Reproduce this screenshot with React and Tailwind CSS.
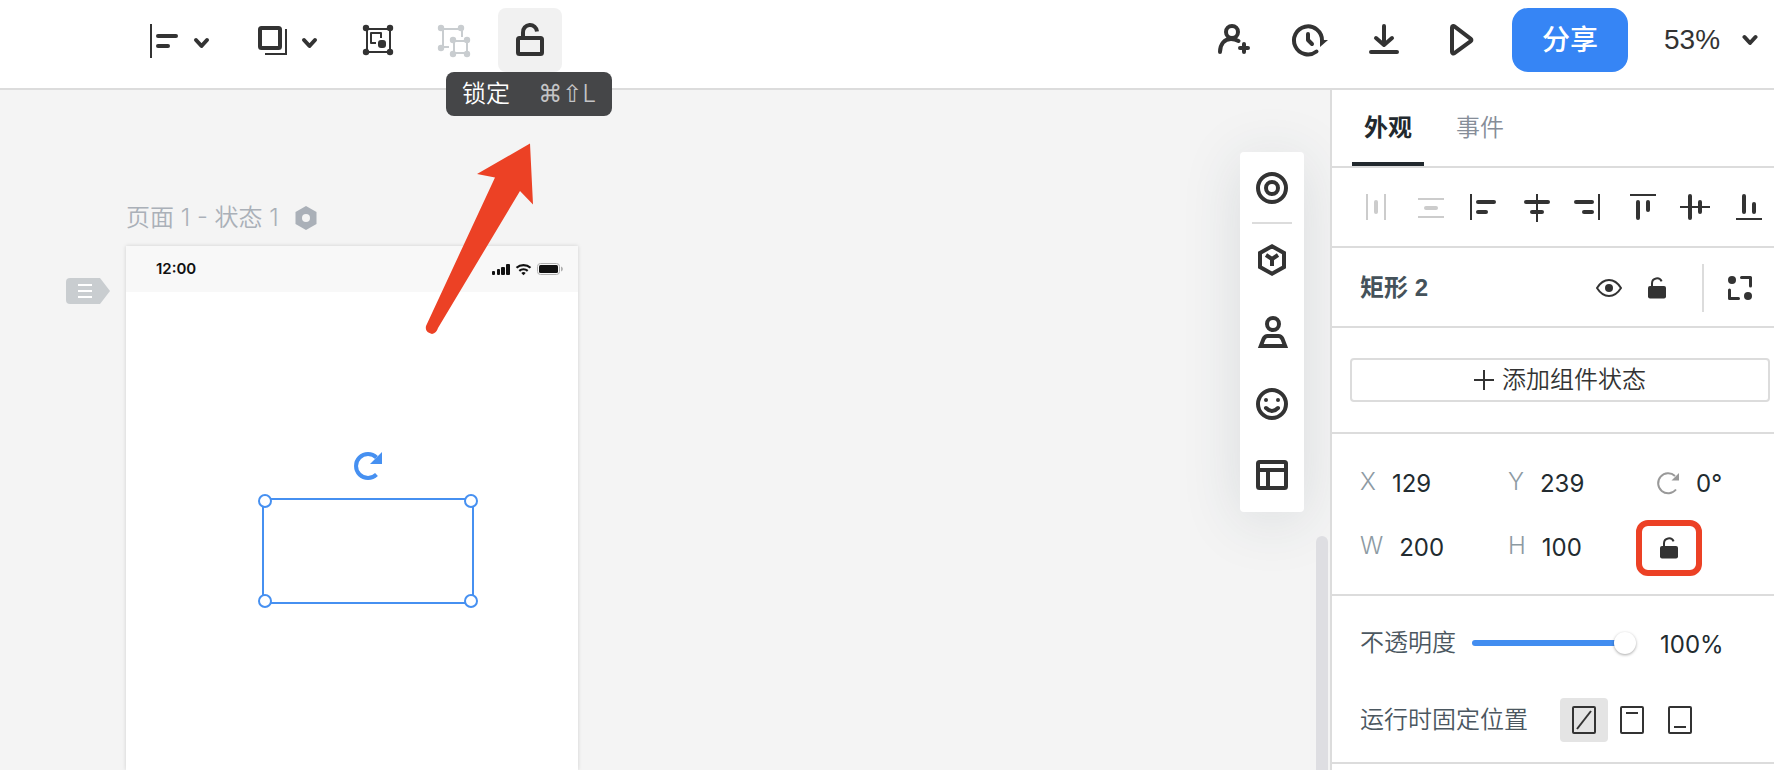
import React, { useState } from 'react';

const INK = '#333333';

function Chevron({ x, y }) {
  return (
    <path
      d={`M${x} ${y}l5.5 6 5.5-6`}
      fill="none"
      stroke={INK}
      strokeWidth="4"
      strokeLinecap="round"
      strokeLinejoin="round"
    />
  );
}

function Unlock({ className }) {
  return (
    <svg width="18" height="22" viewBox="0 0 18 22" className={className}>
      <path d="M4 9V6.200a5 5 0 0 1 9.600-1.800" fill="none" stroke={INK} strokeWidth="2" />
      <rect y="9" width="18" height="12.500" rx="2" fill={INK} />
    </svg>
  );
}

function ToolButton({ label, children, wide, active, disabled }) {
  return (
    <button
      type="button"
      aria-label={label}
      disabled={disabled}
      className={`h-16 shrink-0 rounded-lg ${wide ? 'w-24' : 'w-16'} ${active ? 'bg-[#f1f1f1]' : ''}`}
    >
      {children}
    </button>
  );
}

function Toolbar() {
  const [zoom, setZoom] = useState('53%');

  return (
    <header className="flex items-start justify-between border-b-2 border-[#dcdcdc] bg-white pt-2 pr-4 pb-4 pl-[130px]">
      <div className="flex gap-3">
        <ToolButton label="对齐" wide>
          <svg width="96" height="64" fill={INK}>
            <rect x="20" y="16" width="2" height="34" />
            <rect x="26" y="26" width="22" height="4" rx="2" />
            <rect x="26" y="36" width="14" height="4" rx="2" />
            <Chevron x={66} y={32} />
          </svg>
        </ToolButton>

        <ToolButton label="图层" wide>
          <svg width="96" height="64">
            <rect x="22" y="20" width="20" height="20" rx="1.500" fill="none" stroke={INK} strokeWidth="4" />
            <path d="M48 21v25H27" fill="none" stroke={INK} strokeWidth="2" />
            <Chevron x={66} y={32} />
          </svg>
        </ToolButton>

        <ToolButton label="组合">
          <svg width="64" height="64" fill={INK}>
            <path d="M21 21h23v23H21z" fill="none" stroke={INK} strokeWidth="2" />
            <circle cx="20" cy="20" r="3.200" />
            <circle cx="44" cy="20" r="3.200" />
            <circle cx="20" cy="44" r="3.200" />
            <circle cx="44" cy="44" r="3.200" />
            <path d="M30 35h-5V25h10v5" fill="none" stroke={INK} strokeWidth="2" strokeLinejoin="round" />
            <rect x="32" y="32" width="8" height="8" rx="3" />
          </svg>
        </ToolButton>

        <ToolButton label="取消组合" disabled>
          <svg width="64" height="64" fill="#c9cdd0">
            <path d="M27 39h-6V21h19v8M32 33h13v12H32z" fill="none" stroke="#c9cdd0" strokeWidth="2" />
            <circle cx="19" cy="20" r="3.200" />
            <circle cx="39" cy="20" r="3.200" />
            <circle cx="19" cy="40" r="3.200" />
            <circle cx="31" cy="32" r="3.200" />
            <circle cx="45" cy="32" r="3.200" />
            <circle cx="31" cy="46" r="3.200" />
            <circle cx="45" cy="46" r="3.200" />
          </svg>
        </ToolButton>

        <div className="relative flex">
          <ToolButton label="锁定" active>
            <svg width="64" height="64" fill="none" stroke={INK} strokeWidth="4">
              <rect x="20" y="30" width="24" height="16" rx="1.500" />
              <path d="M25 29v-4.500a7 7 0 0 1 14-1" />
            </svg>
          </ToolButton>
          <div
            role="tooltip"
            className="absolute top-16 -left-13 z-20 flex h-11 w-[166px] items-center justify-between rounded-lg bg-[#454648] px-4 text-2xl whitespace-nowrap text-white"
          >
            <span className="font-[350]">锁定</span>
            <span className="font-['DejaVu_Sans','Inter',sans-serif] leading-8 text-[#c4c4c6]">
              ⌘⇧<span className="font-['Inter',sans-serif] font-light">L</span>
            </span>
          </div>
        </div>
      </div>

      <div className="flex items-center">
        <div className="flex gap-3">
          <ToolButton label="邀请成员">
            <svg width="64" height="64" fill="none" stroke={INK} strokeWidth="4" strokeLinecap="round">
              <circle cx="32" cy="24" r="6" />
              <path d="M20 44c0-8 4.500-13 11-13 3 0 5 .6 7.500 2" />
              <path d="M44 36v8M40 40h8" />
            </svg>
          </ToolButton>
          <ToolButton label="历史版本">
            <svg width="64" height="64" fill="none" stroke={INK} strokeWidth="4" strokeLinecap="round">
              <path d="M40.500 43.500A14 14 0 1 1 46 32.500" />
              <path d="M32 26v6l4 4" strokeLinejoin="round" />
              <path d="M44 32h8l-8 7z" fill={INK} stroke="none" />
            </svg>
          </ToolButton>
          <ToolButton label="下载">
            <svg width="64" height="64" fill="none" stroke={INK} strokeWidth="4" strokeLinecap="round" strokeLinejoin="round">
              <path d="M32 18v18M24 30l8 7 8-7M19 44h26" />
            </svg>
          </ToolButton>
          <ToolButton label="预览">
            <svg width="64" height="64" fill="none" stroke={INK} strokeWidth="4" strokeLinejoin="round">
              <path d="M24 19.500a1.500 1.500 0 0 1 2.400-1.200l16.400 12.500a1.500 1.500 0 0 1 0 2.400L26.400 45.200a1.500 1.500 0 0 1-2.400-1.200z" />
            </svg>
          </ToolButton>
        </div>
        <button
          type="button"
          className="ml-5 h-16 w-[116px] rounded-2xl bg-[#3685f5] text-[28px] leading-8 font-medium text-white"
        >
          分享
        </button>
        <label className="relative ml-9 flex h-16 items-center">
          <select
            aria-label="缩放比例"
            value={zoom}
            onChange={(e) => setZoom(e.target.value)}
            className="w-[94px] appearance-none bg-transparent font-['Liberation_Sans',sans-serif] text-[28px] leading-8 text-[#333333]"
          >
            <option>53%</option>
            <option>100%</option>
          </select>
          <svg width="16" height="12" className="pointer-events-none absolute right-0">
            <Chevron x={2.500} y={3} />
          </svg>
        </label>
      </div>
    </header>
  );
}

function StatusBar() {
  return (
    <div className="flex h-[46px] items-center justify-between bg-[#f8f8f8] pr-[14px] pl-[30px]">
      <span className="text-[15px] leading-5 font-semibold text-[#111111]">12:00</span>
      <svg width="74" height="14" fill="#111111">
        <rect x="2" y="9" width="3" height="4" rx="1" />
        <rect x="7" y="7" width="3" height="6" rx="1" />
        <rect x="11" y="5" width="4" height="8" rx="1" />
        <rect x="16" y="2" width="4" height="11" rx="1" />
        <path d="M26.500 5.800a10.500 10.500 0 0 1 14 0M29.300 8.800a6.500 6.500 0 0 1 8.400 0" fill="none" stroke="#111111" strokeWidth="2.200" />
        <path d="M31.300 10.900a3.400 3.400 0 0 1 4.400 0L33.500 13.200z" />
        <rect x="47.500" y="1.500" width="22" height="11" rx="3" fill="none" stroke="#b0b0b0" />
        <rect x="49" y="3" width="19" height="8" rx="1.500" />
        <path d="M71 4.500c2.500 1 2.500 4 0 5z" fill="#b0b0b0" />
      </svg>
    </div>
  );
}

function Selection() {
  return (
    <div className="absolute top-[252px] left-[136px] h-[106px] w-[212px] border-2 border-[#4690f1]">
      <svg width="28" height="28" className="absolute -top-12 left-[90px]">
        <path d="M22.500 22.500A12 12 0 1 1 22.500 5.500" fill="none" stroke="#4690f1" strokeWidth="4" />
        <path d="M28 0v12H16z" fill="#4690f1" />
      </svg>
      <span className="absolute -top-1.5 -left-1.5 size-[14px] rounded-full border-2 border-[#4690f1] bg-white" />
      <span className="absolute -top-1.5 -right-1.5 size-[14px] rounded-full border-2 border-[#4690f1] bg-white" />
      <span className="absolute -bottom-1.5 -left-1.5 size-[14px] rounded-full border-2 border-[#4690f1] bg-white" />
      <span className="absolute -right-1.5 -bottom-1.5 size-[14px] rounded-full border-2 border-[#4690f1] bg-white" />
    </div>
  );
}

function Palette() {
  return (
    <nav
      aria-label="素材"
      className="absolute top-[62px] right-[26px] flex w-16 flex-col items-center rounded bg-white shadow-[0_8px_60px_rgba(40,60,80,0.13)]"
    >
      <button type="button" aria-label="组件" className="flex h-[70px] w-16 items-center justify-center">
        <svg width="32" height="34" fill="none" stroke={INK} strokeWidth="4">
          <circle cx="16" cy="18" r="14" />
          <circle cx="16" cy="18" r="6" />
        </svg>
      </button>
      <hr className="w-10 border-t-2 border-[#dcdcdc]" />
      <button type="button" aria-label="资源" className="flex h-[72px] w-16 items-center justify-center">
        <svg width="32" height="32" fill="none" stroke={INK} strokeWidth="4">
          <path d="M16 2.300l12 6.700v14l-12 6.700L4 23V9z" />
          <path d="M10 11l6 4 6-4M16 14v8" />
        </svg>
      </button>
      <button type="button" aria-label="我的" className="flex h-[72px] w-16 items-center justify-center">
        <svg width="32" height="32" fill="none" stroke={INK} strokeWidth="4">
          <circle cx="17" cy="8" r="6" />
          <path d="M4.800 30l2.700-7Q9 20 11.500 20h11q2.500 0 4 3l2.700 7z" />
        </svg>
      </button>
      <button type="button" aria-label="图标" className="flex h-[72px] w-16 items-center justify-center">
        <svg width="32" height="32" fill="none" stroke={INK} strokeWidth="4">
          <circle cx="16" cy="16" r="14" />
          <path d="M10 20q6 6 12 0" strokeLinecap="round" />
          <circle cx="10" cy="12" r="2" fill={INK} stroke="none" />
          <circle cx="22" cy="12" r="2" fill={INK} stroke="none" />
        </svg>
      </button>
      <button type="button" aria-label="模板" className="flex h-[72px] w-16 items-center justify-center">
        <svg width="32" height="32" fill="none" stroke={INK} strokeWidth="4">
          <rect x="2" y="2" width="28" height="26" rx="1.500" />
          <path d="M2 10h28M12 10v18" />
        </svg>
      </button>
    </nav>
  );
}

function Canvas() {
  return (
    <main className="relative flex flex-1 flex-col overflow-hidden bg-[#f4f4f4] pt-28 pl-[126px]">
      <div className="flex h-11 items-start gap-4 text-2xl leading-8 font-[350] text-[#aab0b8]">
        <span>页面 1 - 状态 1</span>
        <svg width="22" height="24" className="mt-1">
          <path d="M11 0l10.500 6v12L11 24 .500 18V6z" fill="#aab0b8" />
          <circle cx="11" cy="12" r="4" fill="#f4f4f4" />
        </svg>
      </div>

      <section className="relative w-[452px] flex-1 bg-white shadow-[0_0_4px_rgba(0,0,0,0.15)]">
        <StatusBar />
        <Selection />
      </section>

      {/* page drawer handle */}
      <button type="button" aria-label="页面列表" className="absolute top-[188px] left-[66px]">
        <svg width="44" height="26">
          <path d="M4 0h30l10 13L34 26H4a4 4 0 0 1-4-4V4a4 4 0 0 1 4-4z" fill="#c9cdd0" />
          <path d="M12 7h14M12 13h14M12 19h14" stroke="#ffffff" strokeWidth="2" />
        </svg>
      </button>

      <svg width="112" height="192" className="pointer-events-none absolute top-[52px] left-[423px]">
        <path d="M107 1.500L54 32l18 3.500L3 184c-1 5 2 7 6 8 3-.5 5-3 6-6L97 49l13 13.500z" fill="#ec4125" />
      </svg>

      <Palette />
      <div className="absolute right-0.5 bottom-0 h-[234px] w-3 rounded-t-md bg-[#dedee2]" />
    </main>
  );
}

const alignIcons = [
  {
    label: '水平分布',
    off: true,
    art: (
      <>
        <rect x="6" y="3" width="2" height="26" />
        <rect x="24" y="3" width="2" height="26" />
        <rect x="14" y="9" width="4" height="14" rx="2" />
      </>
    ),
  },
  {
    label: '垂直分布',
    off: true,
    art: (
      <>
        <rect x="5" y="7" width="26" height="2" />
        <rect x="5" y="25" width="26" height="2" />
        <rect x="11" y="15" width="14" height="4" rx="2" />
      </>
    ),
  },
  {
    label: '左对齐',
    art: (
      <>
        <rect x="4" y="3" width="2" height="26" />
        <rect x="10" y="9" width="20" height="4" rx="2" />
        <rect x="10" y="19" width="12" height="4" rx="2" />
      </>
    ),
  },
  {
    label: '水平居中',
    art: (
      <>
        <rect x="17" y="3" width="2" height="28" />
        <rect x="5" y="9" width="26" height="4" rx="2" />
        <rect x="11" y="19" width="14" height="4" rx="2" />
      </>
    ),
  },
  {
    label: '右对齐',
    art: (
      <>
        <rect x="26" y="3" width="2" height="26" />
        <rect x="2" y="9" width="20" height="4" rx="2" />
        <rect x="10" y="19" width="12" height="4" rx="2" />
      </>
    ),
  },
  {
    label: '顶对齐',
    art: (
      <>
        <rect x="5" y="3" width="26" height="2" />
        <rect x="11" y="9" width="4" height="20" rx="2" />
        <rect x="21" y="9" width="4" height="12" rx="2" />
      </>
    ),
  },
  {
    label: '垂直居中',
    art: (
      <>
        <rect x="2" y="15" width="30" height="2" />
        <rect x="10" y="3" width="4" height="26" rx="2" />
        <rect x="20" y="9" width="4" height="14" rx="2" />
      </>
    ),
  },
  {
    label: '底对齐',
    art: (
      <>
        <rect x="5" y="27" width="26" height="2" />
        <rect x="11" y="3" width="4" height="20" rx="2" />
        <rect x="21" y="11" width="4" height="12" rx="2" />
      </>
    ),
  },
];

function NumberField({ label, value }) {
  return (
    <label className="flex h-16 items-center gap-4">
      <span className="pb-1 font-light text-[#8d9aa3]">{label}</span>
      <input type="text" defaultValue={value} className="w-16 bg-transparent text-[#222b30] outline-none" />
    </label>
  );
}

function Inspector() {
  const [tab, setTab] = useState('外观');
  const [opacity, setOpacity] = useState(100);
  const [pin, setPin] = useState('无');

  return (
    <aside className="w-[444px] shrink-0 border-l-2 border-[#dcdcdc] bg-white text-2xl leading-8">
      <div className="flex gap-5 border-b-2 border-[#dcdcdc] pl-5">
        {['外观', '事件'].map((name) => (
          <button
            key={name}
            type="button"
            onClick={() => setTab(name)}
            className={`h-[76px] border-b-4 px-3 pt-1 ${
              tab === name ? 'border-[#22292e] font-bold text-[#22292e]' : 'border-transparent font-[350] text-[#868d98]'
            }`}
          >
            {name}
          </button>
        ))}
      </div>

      <div className="flex h-20 items-center gap-[21px] border-b-2 border-[#dcdcdc] pl-7">
        {alignIcons.map(({ label, off, art }) => (
          <button key={label} type="button" aria-label={label} disabled={off} className="shrink-0">
            <svg width="32" height="32" fill={off ? '#cccccc' : INK}>
              {art}
            </svg>
          </button>
        ))}
      </div>

      {/* layer name */}
      <div className="flex h-20 items-center border-b-2 border-[#dcdcdc] pt-0.5 pr-[10px] pl-7">
        <h2 className="flex-1 font-['Liberation_Sans','Noto_Sans_CJK_SC',sans-serif] font-bold text-[#45525a]">
          矩形 2
        </h2>
        <button type="button" aria-label="显示" className="flex size-12 items-center justify-center">
          <svg width="26" height="20">
            <path d="M1 10Q6 2 13 2t12 8q-5 8-12 8T1 10z" fill="none" stroke={INK} strokeWidth="2" />
            <circle cx="13" cy="10" r="4" fill={INK} />
          </svg>
        </button>
        <button type="button" aria-label="锁定图层" className="flex size-12 items-center justify-center">
          <Unlock />
        </button>
        <span className="ml-[21px] h-12 w-0.5 bg-[#dcdcdc]" />
        <button type="button" aria-label="转为组件" className="ml-3 flex size-12 items-center justify-center">
          <svg width="24" height="24" fill="none" stroke={INK} strokeWidth="3" strokeLinejoin="round">
            <circle cx="4" cy="4" r="4" fill={INK} stroke="none" />
            <circle cx="20" cy="20" r="4" fill={INK} stroke="none" />
            <path d="M13.500 1.500h9V10M1.500 14v8.500h9" strokeLinecap="round" />
          </svg>
        </button>
      </div>

      <div className="border-b-2 border-[#dcdcdc] py-[30px] pr-1 pl-[18px]">
        <button
          type="button"
          className="flex h-11 w-full items-center justify-center gap-2 rounded border-2 border-[#dcdcdc] font-[350] text-[#333333]"
        >
          <svg width="20" height="20">
            <path d="M10 0v20M0 10h20" stroke={INK} strokeWidth="2" />
          </svg>
          添加组件状态
        </button>
      </div>

      <div className="grid grid-cols-[148px_148px_1fr] border-b-2 border-[#dcdcdc] pt-[18px] pb-[14px] pl-7">
        <NumberField label="X" value="129" />
        <NumberField label="Y" value="239" />
        <label className="flex h-16 items-center gap-4">
          <svg width="24" height="24" role="img" aria-label="旋转">
            <path d="M20 17.500A10 10 0 1 1 19 4" fill="none" stroke="#999999" strokeWidth="2" />
            <path d="M23 1v7.500h-7.500z" fill="#999999" />
          </svg>
          <input type="text" defaultValue="0°" className="w-12 bg-transparent text-[#222b30] outline-none" />
        </label>
        <NumberField label="W" value="200" />
        <NumberField label="H" value="100" />
        <div className="flex h-16 items-center">
          <button type="button" aria-label="锁定宽高比" className="relative flex h-14 w-[26px] items-center justify-center">
            <Unlock />
            <span className="absolute inset-y-0 -left-5 w-[66px] rounded-xl border-6 border-[#ec4125]" />
          </button>
        </div>
      </div>

      <div className="border-b-2 border-[#dcdcdc] pt-[25px] pb-5 pl-7 text-[#4b5760]">
        <div className="flex h-11 items-center">
          <label htmlFor="opacity" className="font-[350]">
            不透明度
          </label>
          <input
            id="opacity"
            type="range"
            min="0"
            max="100"
            value={opacity}
            onChange={(e) => setOpacity(Number(e.target.value))}
            style={{ '--fill': `${opacity}%` }}
            className="ml-4 h-[22px] w-[164px] appearance-none bg-transparent [&::-webkit-slider-runnable-track]:h-1.5 [&::-webkit-slider-runnable-track]:rounded-sm [&::-webkit-slider-runnable-track]:bg-[linear-gradient(to_right,#428df0_calc(var(--fill)-10px),transparent_0)] [&::-webkit-slider-thumb]:-mt-2 [&::-webkit-slider-thumb]:size-[22px] [&::-webkit-slider-thumb]:appearance-none [&::-webkit-slider-thumb]:rounded-full [&::-webkit-slider-thumb]:bg-white [&::-webkit-slider-thumb]:shadow-[0_1px_3px_rgba(0,0,0,0.35)]"
          />
          <output htmlFor="opacity" className="ml-6 pt-1 text-[#222b30]">
            {opacity}%
          </output>
        </div>

        <div className="mt-[33px] flex h-11 items-center">
          <span className="mr-8 font-[350]">运行时固定位置</span>
          {[
            { name: '无', d: 'M17 31L31 13' },
            { name: '顶部', d: 'M18 15h12' },
            { name: '底部', d: 'M18 29h12' },
          ].map(({ name, d }) => (
            <button
              key={name}
              type="button"
              aria-label={name}
              onClick={() => setPin(name)}
              className={`h-11 w-12 rounded-sm ${pin === name ? 'bg-[#e4e4e4]' : ''}`}
            >
              <svg width="48" height="44" fill="none" stroke={INK} strokeWidth="2">
                <rect x="13" y="9" width="22" height="26" rx="1" />
                <path d={d} />
              </svg>
            </button>
          ))}
        </div>
      </div>
    </aside>
  );
}

export default function App() {
  return (
    <div className="flex h-screen flex-col overflow-hidden font-['Inter','Noto_Sans_CJK_SC',sans-serif]">
      <Toolbar />
      <div className="flex min-h-0 flex-1">
        <Canvas />
        <Inspector />
      </div>
    </div>
  );
}
